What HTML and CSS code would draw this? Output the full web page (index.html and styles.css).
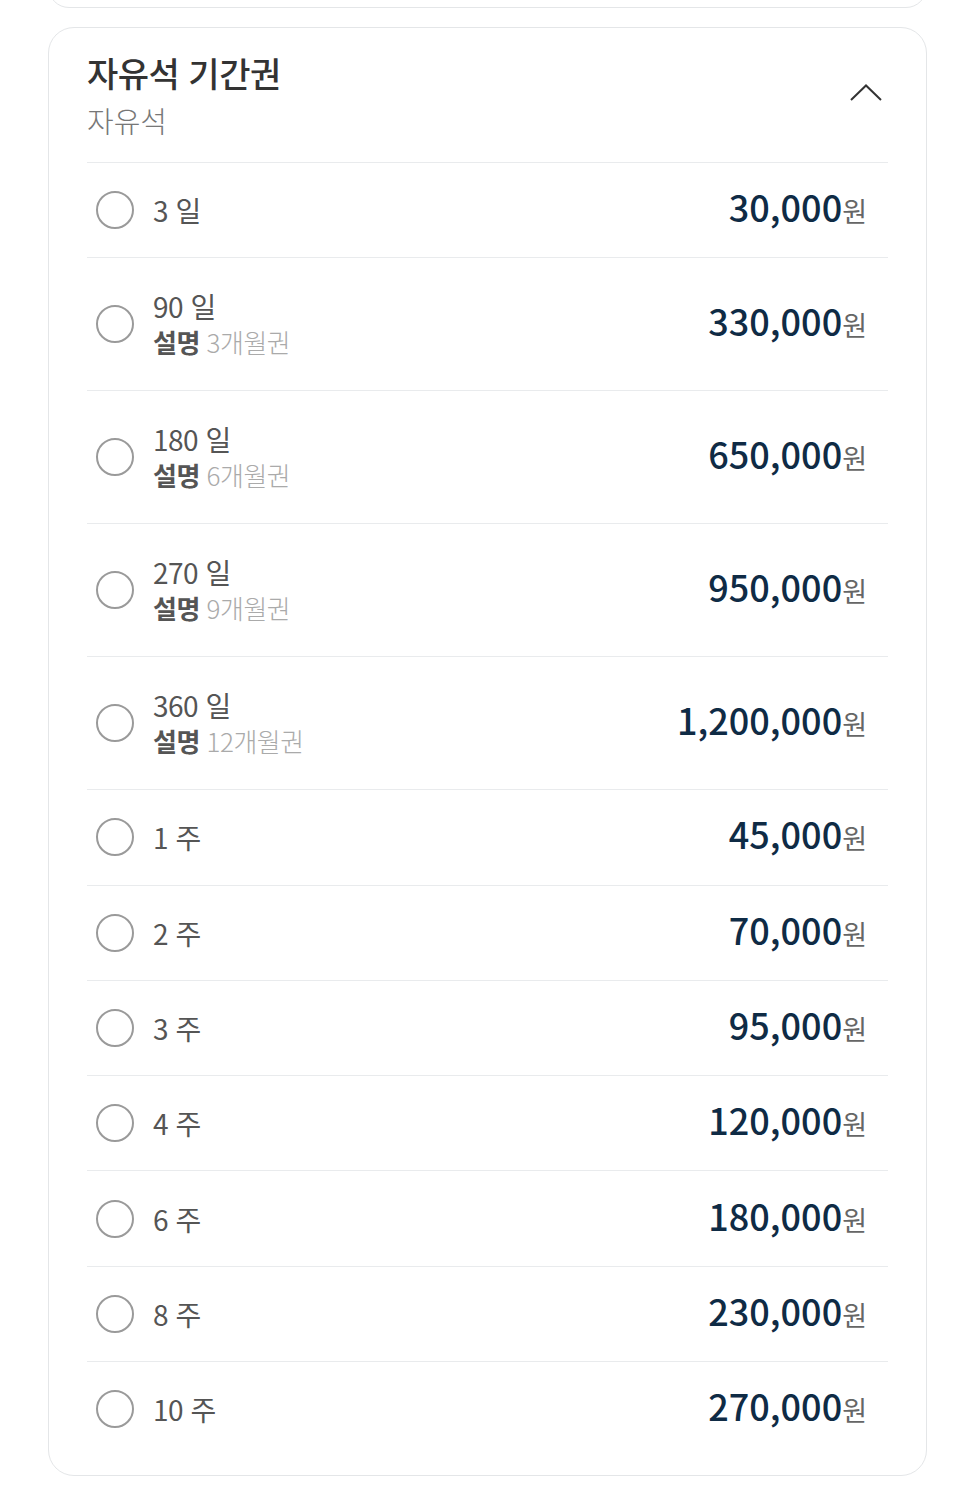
FILE: index.html
```html
<!DOCTYPE html>
<html lang="ko">
<head>
  <meta charset="UTF-8">
  <meta name="viewport" content="width=device-width, initial-scale=1.0">
  <title>자유석 기간권</title>
  <link rel="stylesheet" href="styles.css">
</head>
<body>

<div class="card prevCard"></div>

<div class="card">
  <div class="cardHeader">
    <div>
      <h2 class="cardTitle">자유석 기간권</h2>
      <p class="cardSub">자유석</p>
    </div>
    <svg class="chevron" width="34" height="18" viewBox="0 0 34 18">
      <polyline points="2,16 17,1.5 32,16" fill="none" stroke="#333" stroke-width="2"/>
    </svg>
  </div>

  <ul class="ticketList">
    <li class="ticket">
      <span class="radio"></span>
      <div class="ticketInfo"><div class="ticketName">3 일</div></div>
      <div class="price">30,000<span class="won">원</span></div>
    </li>
    <li class="ticket tall">
      <span class="radio"></span>
      <div class="ticketInfo">
        <div class="ticketName">90 일</div>
        <div class="ticketDesc"><b>설명</b> 3개월권</div>
      </div>
      <div class="price">330,000<span class="won">원</span></div>
    </li>
    <li class="ticket tall">
      <span class="radio"></span>
      <div class="ticketInfo">
        <div class="ticketName">180 일</div>
        <div class="ticketDesc"><b>설명</b> 6개월권</div>
      </div>
      <div class="price">650,000<span class="won">원</span></div>
    </li>
    <li class="ticket tall">
      <span class="radio"></span>
      <div class="ticketInfo">
        <div class="ticketName">270 일</div>
        <div class="ticketDesc"><b>설명</b> 9개월권</div>
      </div>
      <div class="price">950,000<span class="won">원</span></div>
    </li>
    <li class="ticket tall">
      <span class="radio"></span>
      <div class="ticketInfo">
        <div class="ticketName">360 일</div>
        <div class="ticketDesc"><b>설명</b> 12개월권</div>
      </div>
      <div class="price">1,200,000<span class="won">원</span></div>
    </li>
    <li class="ticket">
      <span class="radio"></span>
      <div class="ticketInfo"><div class="ticketName">1 주</div></div>
      <div class="price">45,000<span class="won">원</span></div>
    </li>
    <li class="ticket">
      <span class="radio"></span>
      <div class="ticketInfo"><div class="ticketName">2 주</div></div>
      <div class="price">70,000<span class="won">원</span></div>
    </li>
    <li class="ticket">
      <span class="radio"></span>
      <div class="ticketInfo"><div class="ticketName">3 주</div></div>
      <div class="price">95,000<span class="won">원</span></div>
    </li>
    <li class="ticket">
      <span class="radio"></span>
      <div class="ticketInfo"><div class="ticketName">4 주</div></div>
      <div class="price">120,000<span class="won">원</span></div>
    </li>
    <li class="ticket">
      <span class="radio"></span>
      <div class="ticketInfo"><div class="ticketName">6 주</div></div>
      <div class="price">180,000<span class="won">원</span></div>
    </li>
    <li class="ticket">
      <span class="radio"></span>
      <div class="ticketInfo"><div class="ticketName">8 주</div></div>
      <div class="price">230,000<span class="won">원</span></div>
    </li>
    <li class="ticket">
      <span class="radio"></span>
      <div class="ticketInfo"><div class="ticketName">10 주</div></div>
      <div class="price">270,000<span class="won">원</span></div>
    </li>
  </ul>
</div>

</body>
</html>
```

FILE: styles.css
```css
body {
  margin: 0;
  padding: 0 45px 0 48px;
  background: #fff;
  font-family: "Noto Sans CJK KR", "Noto Sans", sans-serif;
  color: #333;
}
.card {
  border: 1.5px solid #e4e6e8;
  border-radius: 26px;
  background: #fff;
  padding: 0 38px 19px 38px;
}
.prevCard {
  height: 40px;
  margin-top: -34px;
  padding: 0;
  margin-bottom: 19px;
}
.cardHeader {
  display: flex;
  justify-content: space-between;
  align-items: center;
  padding: 22px 5px 18px 0;
  border-bottom: 1px solid #e9ebed;
}
.cardTitle {
  margin: 0;
  font-size: 34px;
  font-weight: 500;
  line-height: 46px;
  color: #333;
  letter-spacing: -0.5px;
}
.cardSub {
  margin: 0;
  font-size: 29px;
  font-weight: 300;
  line-height: 48px;
  color: #777;
}
.chevron {
  margin-top: -8px;
}
.ticketList {
  list-style: none;
  margin: 0;
  padding: 0;
}
.ticket {
  display: flex;
  align-items: center;
  height: 94.3px;
  padding: 0 21px 0 9px;
  border-bottom: 1px solid #e9ebed;
}
.ticket:last-child {
  border-bottom: none;
}
.ticket.tall {
  height: 132px;
}
.radio {
  width: 34px;
  height: 34px;
  border: 2px solid #9a9a9a;
  border-radius: 50%;
  flex-shrink: 0;
  margin-right: 19px;
}
.ticketInfo {
  flex: 1;
}
.ticketName {
  font-size: 28px;
  line-height: 36px;
  color: #555;
  letter-spacing: -0.5px;
}
.ticketDesc {
  font-size: 26px;
  line-height: 36px;
  font-weight: 300;
  color: #aaa;
  letter-spacing: -0.5px;
}
.ticketDesc b {
  font-weight: 700;
  color: #555;
}
.price {
  font-size: 36px;
  font-weight: 500;
  line-height: 44px;
  color: #0f2b45;
  margin-top: -3px;
}
.won {
  font-size: 27px;
  font-weight: 400;
  color: #666;
}
```
